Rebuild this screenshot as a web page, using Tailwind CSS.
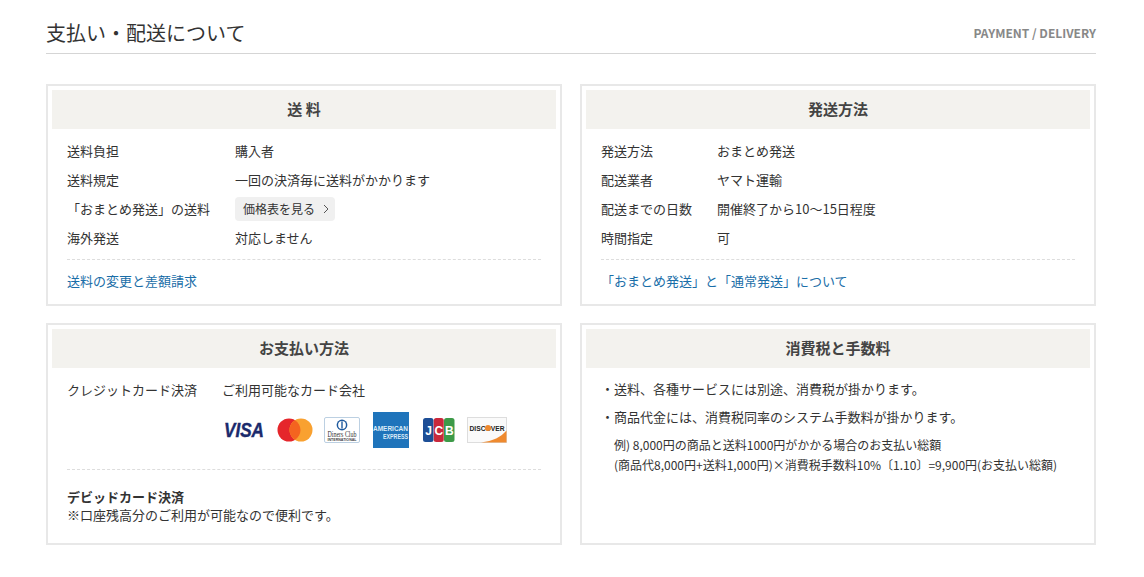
<!DOCTYPE html>
<html lang="ja">
<head>
    <meta charset="UTF-8">
    <title>支払い・配送について</title>
    <script src="https://cdn.jsdelivr.net/npm/@tailwindcss/browser@4"></script>
</head>
<body class="bg-white text-[#333] text-[13px] font-['Noto_Sans_CJK_JP','Noto_Sans',sans-serif]">
    <div class="w-[1050px] ml-[46px] pt-[17px]">
        <!-- 見出し -->
        <div class="flex items-center justify-between h-[37px] pb-[4px] border-b border-[#d5d5d5]">
            <h2 class="text-[20px] leading-[32px] text-[#333]">支払い・配送について</h2>
            <span class="text-[12px] font-bold text-[#888]">PAYMENT / DELIVERY</span>
        </div>

        <div class="grid grid-cols-[516px_516px] gap-x-[18px] gap-y-[17px] mt-[30px]">
            <!-- 送料 -->
            <section class="h-[222px] border-2 border-[#e8e8e8] p-1">
                <h3 class="h-[39px] bg-[#f3f2ee] flex items-center justify-center text-[15px] font-bold text-[#444]">送 料</h3>
                <dl class="px-[15px] pt-[7px]">
                    <div class="flex items-center h-[29px]"><dt class="w-[168px]">送料負担</dt><dd>購入者</dd></div>
                    <div class="flex items-center h-[29px]"><dt class="w-[168px]">送料規定</dt><dd>一回の決済毎に送料がかかります</dd></div>
                    <div class="flex items-center h-[29px]"><dt class="w-[168px]">「おまとめ発送」の送料</dt>
                        <dd class="flex items-center h-[24px] pl-2 pr-[6px] gap-[8px] rounded bg-[#f0f0f0] text-[12px]">価格表を見る
                            <svg width="6" height="10" viewBox="0 0 6 10" fill="none" stroke="#555" stroke-width="1"><path d="M1 1l4 4-4 4"/></svg>
                        </dd>
                    </div>
                    <div class="flex items-center h-[29px]"><dt class="w-[168px]">海外発送</dt><dd>対応しません</dd></div>
                </dl>
                <div class="mx-[15px] mt-[7px] border-t border-dashed border-[#ddd] pt-[11px]">
                    <a class="text-[#1a6ea8]">送料の変更と差額請求</a>
                </div>
            </section>

            <!-- 発送方法 -->
            <section class="h-[222px] border-2 border-[#e8e8e8] p-1">
                <h3 class="h-[39px] bg-[#f3f2ee] flex items-center justify-center text-[15px] font-bold text-[#444]">発送方法</h3>
                <dl class="px-[15px] pt-[7px]">
                    <div class="flex items-center h-[29px]"><dt class="w-[116px]">発送方法</dt><dd>おまとめ発送</dd></div>
                    <div class="flex items-center h-[29px]"><dt class="w-[116px]">配送業者</dt><dd>ヤマト運輸</dd></div>
                    <div class="flex items-center h-[29px]"><dt class="w-[116px]">配送までの日数</dt><dd>開催終了から10〜15日程度</dd></div>
                    <div class="flex items-center h-[29px]"><dt class="w-[116px]">時間指定</dt><dd>可</dd></div>
                </dl>
                <div class="mx-[15px] mt-[7px] border-t border-dashed border-[#ddd] pt-[11px]">
                    <a class="text-[#1a6ea8]">「おまとめ発送」と「通常発送」について</a>
                </div>
            </section>

            <!-- お支払い方法 -->
            <section class="h-[222px] border-2 border-[#e8e8e8] p-1">
                <h3 class="h-[39px] bg-[#f3f2ee] flex items-center justify-center text-[15px] font-bold text-[#444]">お支払い方法</h3>
                <div class="px-[15px] pt-[7px]">
                    <div class="flex items-center h-[29px]"><span class="w-[155px]">クレジットカード決済</span><span>ご利用可能なカード会社</span></div>
                    <div class="flex items-center h-[36px] mt-[8px] ml-[157px]">
                        <!-- VISA -->
                        <svg width="42" height="24" viewBox="0 0 42 24" class="shrink-0 overflow-visible"><text x="0" y="19" font-family="Liberation Sans" font-size="19.5" font-weight="700" font-style="italic" fill="#1a2a6c" stroke="#1a2a6c" stroke-width=".4" textLength="40" lengthAdjust="spacingAndGlyphs">VISA</text></svg>
                        <!-- Mastercard -->
                        <svg width="36" height="24" viewBox="0 0 36 24" class="ml-[11px] shrink-0"><circle cx="12" cy="12" r="11.5" fill="#e5262b"/><circle cx="24" cy="12" r="11.5" fill="#f9a130"/><path d="M18 2.2a11.5 11.5 0 0 1 0 19.6a11.5 11.5 0 0 1 0-19.6z" fill="#f4641f"/></svg>
                        <!-- Diners Club -->
                        <svg width="36" height="26" viewBox="0 0 36 26" class="ml-[11px] shrink-0 overflow-visible"><rect x=".5" y=".5" width="35" height="25" rx="1.5" fill="#fff" stroke="#bcd0e2"/><circle cx="18" cy="8" r="5.4" fill="#1f5a9e"/><circle cx="18" cy="8" r="3.9" fill="#fff"/><rect x="17.3" y="4.4" width="1.4" height="7.2" fill="#1f5a9e"/><text x="3.5" y="20" font-family="Liberation Serif" font-size="8.5" fill="#333" textLength="29" lengthAdjust="spacingAndGlyphs">Diners Club</text><text x="3.5" y="23.5" font-family="Liberation Sans" font-size="3" font-weight="700" fill="#444" textLength="29" lengthAdjust="spacingAndGlyphs">INTERNATIONAL</text></svg>
                        <!-- American Express -->
                        <svg width="36" height="36" viewBox="0 0 36 36" class="ml-[13px] shrink-0 overflow-visible"><rect width="36" height="36" fill="#1f74bb"/><text x="0" y="18.5" font-family="Liberation Sans" font-size="8" font-weight="700" fill="#dcebf7" textLength="35" lengthAdjust="spacingAndGlyphs">AMERICAN</text><text x="10" y="26.5" font-family="Liberation Sans" font-size="8" font-weight="700" fill="#dcebf7" textLength="25" lengthAdjust="spacingAndGlyphs">EXPRESS</text></svg>
                        <!-- JCB -->
                        <svg width="32" height="24" viewBox="0 0 32 24" class="ml-[14px] shrink-0"><rect width="10.5" height="24" rx="2.5" fill="#1d4e96"/><rect x="10.75" width="10" height="24" rx="2.5" fill="#c9283c"/><rect x="21" width="10.5" height="24" rx="2.5" fill="#3d9a48"/><g font-family="Liberation Sans" font-size="12" font-weight="700" fill="#fff" text-anchor="middle"><text x="5.5" y="16.5">J</text><text x="15.75" y="16.5">C</text><text x="26.25" y="16.5">B</text></g></svg>
                        <!-- Discover -->
                        <svg width="40" height="26" viewBox="0 0 40 26" class="ml-[12px] shrink-0 overflow-visible"><rect x=".5" y=".5" width="39" height="25" fill="#fafafa" stroke="#ddd"/><path d="M39.5 13.5V25.5H14C26 24 34 20 39.5 13.5z" fill="#ef8a2f"/><text x="2.5" y="13.5" font-family="Liberation Sans" font-size="7.5" font-weight="700" fill="#222" textLength="35" lengthAdjust="spacingAndGlyphs">DISCOVER</text><circle cx="21" cy="11" r="3" fill="#ef8a2f"/></svg>
                    </div>
                </div>
                <div class="mx-[15px] mt-[21px] border-t border-dashed border-[#ddd] pt-[18px] leading-[18px]">
                    <p class="font-bold">デビッドカード決済</p>
                    <p>※口座残高分のご利用が可能なので便利です。</p>
                </div>
            </section>

            <!-- 消費税と手数料 -->
            <section class="h-[222px] border-2 border-[#e8e8e8] p-1">
                <h3 class="h-[39px] bg-[#f3f2ee] flex items-center justify-center text-[15px] font-bold text-[#444]">消費税と手数料</h3>
                <div class="px-[15px] pt-[7px]">
                    <p class="h-[28px] flex items-center">・送料、各種サービスには別途、消費税が掛かります。</p>
                    <p class="h-[28px] flex items-center">・商品代金には、消費税同率のシステム手数料が掛かります。</p>
                    <p class="pl-[13px] mt-[4px] text-[12px] leading-[20px]">例) 8,000円の商品と送料1000円がかかる場合のお支払い総額<br>(商品代8,000円+送料1,000円)×消費税手数料10%〔1.10〕=9,900円(お支払い総額)</p>
                </div>
            </section>
        </div>
    </div>
</body>
</html>
